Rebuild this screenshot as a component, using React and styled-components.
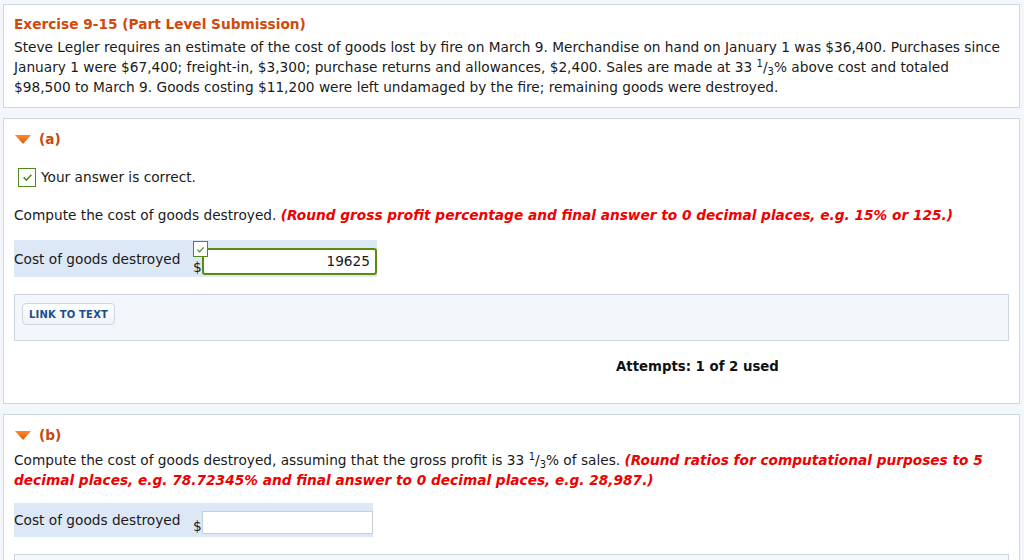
import React from "react";
import styled, { createGlobalStyle } from "styled-components";

const GlobalStyle = createGlobalStyle`
  html, body {
    margin: 0;
    padding: 0;
    background: #f3f6fa;
  }
  body {
    padding: 4px 3px 0 3px;
    font-family: "DejaVu Sans", Verdana, sans-serif;
    font-size: 13.7px;
    color: #1a1a1a;
  }
`;

const Panel = styled.section`
  background: #ffffff;
  border: 1px solid #cdd6e2;
  padding: ${(p) => p.$pad || "10px 10px 26px 10px"};
  margin-bottom: 10px;
  width: 1017px;
  box-sizing: border-box;
`;

const Title = styled.h2`
  margin: 0;
  font-size: 13.7px;
  line-height: 20px;
  font-weight: bold;
  color: #d1490c;
`;

const Text = styled.p`
  margin: ${(p) => p.$mt || 0}px 0 0 0;
  line-height: 20px;
`;

const Hint = styled.span`
  color: #f00000;
  font-weight: bold;
  font-style: italic;
`;

const Sup = styled.sup`
  font-size: 10px;
  line-height: 0;
  vertical-align: 5px;
`;

const Sub = styled.sub`
  font-size: 10px;
  line-height: 0;
  vertical-align: -3px;
`;

const PartHeading = styled.div`
  display: flex;
  align-items: center;
  gap: 8px;
  height: 20px;
  color: #c8480d;
  font-weight: bold;
  padding-left: 1px;
`;

const Triangle = () => (
  <svg width="16" height="9" viewBox="0 0 16 9">
    <defs>
      <linearGradient id="tri" x1="0" y1="0" x2="0" y2="1">
        <stop offset="0" stopColor="#f98a2c" />
        <stop offset="1" stopColor="#e9560e" />
      </linearGradient>
    </defs>
    <polygon points="0,0 16,0 8,9" fill="url(#tri)" />
  </svg>
);

const CorrectRow = styled.div`
  display: flex;
  align-items: center;
  gap: 5px;
  margin-top: 18px;
  padding-left: 4px;
  height: 20px;
`;

const CheckBox = styled.span`
  display: inline-flex;
  align-items: center;
  justify-content: center;
  width: ${(p) => p.$size}px;
  height: ${(p) => p.$size + 1}px;
  box-sizing: border-box;
  border: 1px solid #4f8a1c;
  background: #ffffff;
`;

const CheckMark = ({ w = 10 }) => (
  <svg width={w} height={w * 0.8} viewBox="0 0 10 8">
    <polyline points="1.5,4 4,6.5 8.5,1.5" fill="none" stroke="#4f8a1c" strokeWidth="1.4" />
  </svg>
);

const AnswerRow = styled.div`
  display: inline-flex;
  align-items: stretch;
  background: #dde8f7;
  margin-top: ${(p) => p.$mt}px;
  padding: 8px 0 ${(p) => p.$pb || 2}px 0;
`;

const RowLabel = styled.div`
  display: flex;
  align-items: center;
  width: 179px;
  margin-top: -6px;
`;

const AnswerCell = styled.div`
  position: relative;
  display: flex;
  align-items: flex-end;
`;

const Dollar = styled.span`
  line-height: 15px;
  width: 9px;
`;

const Input = styled.div`
  box-sizing: border-box;
  width: ${(p) => p.$w}px;
  height: ${(p) => (p.$ok ? 27 : 23)}px;
  background: #ffffff;
  border: ${(p) => (p.$ok ? "2px solid #5a8c0a" : "1px solid #c9cfd6")};
  border-radius: ${(p) => (p.$ok ? "3px" : "0")};
  text-align: right;
  padding: 0 5px;
  line-height: ${(p) => (p.$ok ? 23 : 21)}px;
`;

const Badge = styled.span`
  position: absolute;
  left: 0;
  top: -8px;
  z-index: 1;
`;

const LinkBox = styled.div`
  margin-top: 17px;
  background: #f3f6fa;
  border: 1px solid #ccd5e1;
  padding: 8px 7px;
  height: 47px;
  box-sizing: border-box;
`;

const LinkButton = styled.button`
  box-sizing: border-box;
  height: 22px;
  padding: 0 6px;
  border: 1px solid #cfd6df;
  border-radius: 4px;
  background: linear-gradient(#ffffff, #eef2f6);
  color: #1d4d8c;
  font-family: "DejaVu Sans", Verdana, sans-serif;
  font-size: 10px;
  font-weight: bold;
  letter-spacing: 0.2px;
  cursor: pointer;
`;

const Attempts = styled.div`
  margin: 16px 0 0 602px;
  line-height: 20px;
  font-weight: bold;
  font-size: 13.3px;
  color: #111;
`;

export default function App() {
  return (
    <>
      <GlobalStyle />
      <Panel $pad="9px 10px 10px 10px">
        <Title>Exercise 9-15 (Part Level Submission)</Title>
        <Text $mt={3}>
          Steve Legler requires an estimate of the cost of goods lost by fire on March 9. Merchandise on hand on
          January 1 was $36,400. Purchases since January 1 were $67,400; freight-in, $3,300; purchase returns and
          allowances, $2,400. Sales are made at 33 <Sup>1</Sup>/<Sub>3</Sub>% above cost and totaled $98,500 to March 9.
          Goods costing $11,200 were left undamaged by the fire; remaining goods were destroyed.
        </Text>
      </Panel>

      <Panel>
        <PartHeading>
          <Triangle />
          (a)
        </PartHeading>
        <CorrectRow>
          <CheckBox $size={18}>
            <CheckMark w={11} />
          </CheckBox>
          Your answer is correct.
        </CorrectRow>
        <Text $mt={18}>
          Compute the cost of goods destroyed.{" "}
          <Hint>(Round gross profit percentage and final answer to 0 decimal places, e.g. 15% or 125.)</Hint>
        </Text>
        <div>
          <AnswerRow $mt={15}>
            <RowLabel>Cost of goods destroyed</RowLabel>
            <AnswerCell>
              <Badge>
                <CheckBox $size={15}>
                  <CheckMark w={9} />
                </CheckBox>
              </Badge>
              <Dollar>$</Dollar>
              <Input $ok $w={175}>19625</Input>
            </AnswerCell>
          </AnswerRow>
        </div>
        <LinkBox>
          <LinkButton>LINK TO TEXT</LinkButton>
        </LinkBox>
        <Attempts>Attempts: 1 of 2 used</Attempts>
      </Panel>

      <Panel>
        <PartHeading>
          <Triangle />
          (b)
        </PartHeading>
        <Text $mt={5}>
          Compute the cost of goods destroyed, assuming that the gross profit is 33 <Sup>1</Sup>/<Sub>3</Sub>% of sales.{" "}
          <Hint>
            (Round ratios for computational purposes to 5 decimal places, e.g. 78.72345% and final answer to 0 decimal
            places, e.g. 28,987.)
          </Hint>
        </Text>
        <div>
          <AnswerRow $mt={13} $pb={3}>
            <RowLabel>Cost of goods destroyed</RowLabel>
            <AnswerCell>
              <Dollar>$</Dollar>
              <Input $w={171} />
            </AnswerCell>
          </AnswerRow>
        </div>
        <LinkBox>
          <LinkButton>LINK TO TEXT</LinkButton>
        </LinkBox>
      </Panel>
    </>
  );
}
